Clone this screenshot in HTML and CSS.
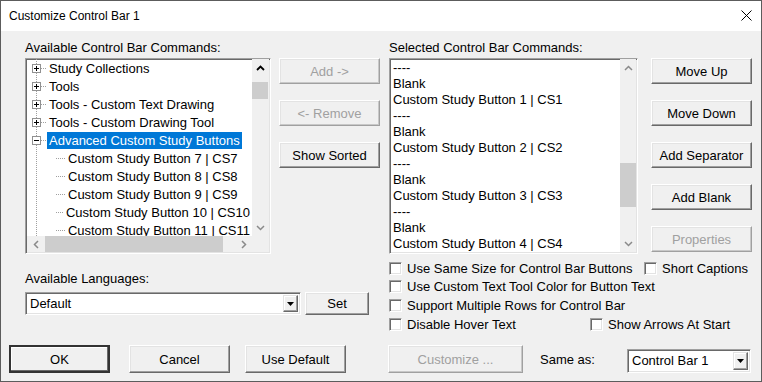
FILE: index.html
```html
<!DOCTYPE html>
<html lang="en">
<head>
    <meta charset="UTF-8">
    <title>Customize Control Bar 1</title>
    <link rel="stylesheet" href="styles.css">
</head>
<body>

    <div class="window">
        <!-- Title bar -->
        <div class="titlebar">
            <span class="title">Customize Control Bar 1</span>
            <svg class="close" width="11" height="11" viewBox="0 0 11 11">
                <path d="M0.5 0.5 L10.5 10.5 M10.5 0.5 L0.5 10.5" stroke="#000" stroke-width="1" fill="none"/>
            </svg>
        </div>

        <div class="client">
            <!-- Command lists -->
            <div class="top-row">
                <div class="tree-group">
                    <div class="label">Available Control Bar Commands:</div>
                    <div class="sunken tree">
                        <div class="tree-rows">
                            <div class="node"><i class="exp plus"></i><i class="twig"></i><span>Study Collections</span></div>
                            <div class="node"><i class="exp plus"></i><i class="twig"></i><span>Tools</span></div>
                            <div class="node"><i class="exp plus"></i><i class="twig"></i><span>Tools - Custom Text Drawing</span></div>
                            <div class="node"><i class="exp plus"></i><i class="twig"></i><span>Tools - Custom Drawing Tool</span></div>
                            <div class="node"><i class="exp minus"></i><i class="twig"></i><span class="sel">Advanced Custom Study Buttons</span></div>
                            <div class="node child"><i class="twig long"></i><span>Custom Study Button 7 | CS7</span></div>
                            <div class="node child"><i class="twig long"></i><span>Custom Study Button 8 | CS8</span></div>
                            <div class="node child"><i class="twig long"></i><span>Custom Study Button 9 | CS9</span></div>
                            <div class="node child"><i class="twig long"></i><span>Custom Study Button 10 | CS10</span></div>
                            <div class="node child"><i class="twig long"></i><span>Custom Study Button 11 | CS11</span></div>
                        </div>
                        <div class="vscroll">
                            <div class="arrow">
                                <svg width="9" height="6" viewBox="0 0 9 6"><path d="M1 5 L4.5 1.5 L8 5" stroke="#000" stroke-width="1.8" fill="none"/></svg>
                            </div>
                            <div class="track"><div class="thumb tree-thumb"></div></div>
                            <div class="arrow">
                                <svg width="9" height="6" viewBox="0 0 9 6"><path d="M1 1 L4.5 4.5 L8 1" stroke="#8a8a8a" stroke-width="1.5" fill="none"/></svg>
                            </div>
                        </div>
                        <div class="hscroll">
                            <div class="arrow">
                                <svg width="6" height="9" viewBox="0 0 6 9"><path d="M5 1 L1.5 4.5 L5 8" stroke="#8a8a8a" stroke-width="1.5" fill="none"/></svg>
                            </div>
                            <div class="track"><div class="thumb h-thumb"></div></div>
                            <div class="arrow">
                                <svg width="6" height="9" viewBox="0 0 6 9"><path d="M1 1 L4.5 4.5 L1 8" stroke="#8a8a8a" stroke-width="1.5" fill="none"/></svg>
                            </div>
                        </div>
                        <div class="corner"></div>
                    </div>
                </div>

                <div class="btn-col mid-col">
                    <div class="btn disabled">Add -&gt;</div>
                    <div class="btn disabled">&lt;- Remove</div>
                    <div class="btn">Show Sorted</div>
                </div>

                <div class="list-group">
                    <div class="label">Selected Control Bar Commands:</div>
                    <div class="sunken list">
                        <div class="list-rows">
                            <div class="item">----</div>
                            <div class="item">Blank</div>
                            <div class="item">Custom Study Button 1 | CS1</div>
                            <div class="item">----</div>
                            <div class="item">Blank</div>
                            <div class="item">Custom Study Button 2 | CS2</div>
                            <div class="item">----</div>
                            <div class="item">Blank</div>
                            <div class="item">Custom Study Button 3 | CS3</div>
                            <div class="item">----</div>
                            <div class="item">Blank</div>
                            <div class="item">Custom Study Button 4 | CS4</div>
                        </div>
                        <div class="vscroll">
                            <div class="arrow">
                                <svg width="9" height="6" viewBox="0 0 9 6"><path d="M1 5 L4.5 1.5 L8 5" stroke="#8a8a8a" stroke-width="1.5" fill="none"/></svg>
                            </div>
                            <div class="track"><div class="thumb list-thumb"></div></div>
                            <div class="arrow">
                                <svg width="9" height="6" viewBox="0 0 9 6"><path d="M1 1 L4.5 4.5 L8 1" stroke="#8a8a8a" stroke-width="1.5" fill="none"/></svg>
                            </div>
                        </div>
                    </div>
                </div>

                <div class="btn-col right-col">
                    <div class="btn">Move Up</div>
                    <div class="btn">Move Down</div>
                    <div class="btn">Add Separator</div>
                    <div class="btn">Add Blank</div>
                    <div class="btn disabled">Properties</div>
                </div>
            </div>

            <!-- Languages and options -->
            <div class="mid-row">
                <div class="lang">
                    <div class="label">Available Languages:</div>
                    <div class="lang-line">
                        <div class="sunken combo lang-combo">
                            <span class="combo-text">Default</span>
                            <div class="drop"><svg width="7" height="4" viewBox="0 0 7 4"><path d="M0 0 H7 L3.5 4 Z" fill="#000"/></svg></div>
                        </div>
                        <div class="btn set-btn">Set</div>
                    </div>
                </div>

                <div class="checks">
                    <div class="check-row first">
                        <label class="check same-size"><i class="box"></i>Use Same Size for Control Bar Buttons</label>
                        <label class="check"><i class="box"></i>Short Captions</label>
                    </div>
                    <div class="check-row">
                        <label class="check"><i class="box"></i>Use Custom Text Tool Color for Button Text</label>
                    </div>
                    <div class="check-row">
                        <label class="check"><i class="box"></i>Support Multiple Rows for Control Bar</label>
                    </div>
                    <div class="check-row">
                        <label class="check hover-text"><i class="box"></i>Disable Hover Text</label>
                        <label class="check"><i class="box"></i>Show Arrows At Start</label>
                    </div>
                </div>
            </div>

            <!-- Dialog buttons -->
            <div class="bottom-row">
                <div class="btn big default">OK</div>
                <div class="btn big cancel">Cancel</div>
                <div class="btn big use-default">Use Default</div>
                <div class="btn big disabled customize">Customize ...</div>
                <div class="same-label">Same as:</div>
                <div class="sunken combo bar-combo">
                    <span class="combo-text">Control Bar 1</span>
                    <div class="drop"><svg width="7" height="4" viewBox="0 0 7 4"><path d="M0 0 H7 L3.5 4 Z" fill="#000"/></svg></div>
                </div>
            </div>
        </div>
    </div>

</body>
</html>
```

FILE: styles.css
```css
* {
    margin: 0;
    padding: 0;
    box-sizing: border-box;
}

body {
    width: 762px;
    height: 382px;
    overflow: hidden;
    font-family: "Liberation Sans", Arial, sans-serif;
    font-size: 13px;
    color: #000;
    background: #f0f0f0;
}

i {
    display: block;
    font-style: normal;
}

.window {
    width: 762px;
    height: 382px;
    border: 1px solid #5c5c5c;
    display: flex;
    flex-direction: column;
    background: #f0f0f0;
}

/* Title bar */
.titlebar {
    height: 30px;
    background: #fff;
    display: flex;
    align-items: center;
    padding-left: 8px;
}

.title {
    font-size: 12px;
    flex: 1;
}

.close {
    margin-right: 9px;
    margin-top: -1px;
}

.client {
    flex: 1;
}

.label {
    height: 16px;
    line-height: 16px;
    white-space: nowrap;
}

/* 3D borders */
.sunken {
    border: 1px solid;
    border-color: #a0a0a0 #fff #fff #a0a0a0;
    box-shadow: inset 1px 1px #696969, inset -1px -1px #e3e3e3;
    background: #fff;
}

.btn {
    display: flex;
    align-items: center;
    justify-content: center;
    height: 26px;
    background: #f0f0f0;
    border: 1px solid;
    border-color: #fff #696969 #696969 #fff;
    box-shadow: inset -1px -1px #a0a0a0, inset 1px 1px #e3e3e3;
    white-space: nowrap;
}

.btn.disabled {
    color: #a0a0a0;
    border-color: #fff #a0a0a0 #a0a0a0 #fff;
    box-shadow: inset -1px -1px #c8c8c8, inset 1px 1px #e3e3e3;
}

.btn.default {
    border: 2px solid;
    border-color: #333 #333 #333 #333;
    box-shadow: inset -1px -1px #696969, inset 1px 1px #fff;
}

/* Top row */
.top-row {
    display: flex;
    padding: 9px 0 0 24px;
}

.tree-group {
    width: 246px;
}

.label + .sunken {
    margin-top: 2px;
}

.tree {
    height: 196px;
    display: grid;
    grid-template-columns: 1fr 17px;
    grid-template-rows: 1fr 16px;
    overflow: hidden;
    padding: 0 1px 1px 1px;
}

.tree-rows {
    overflow: hidden;
    background: linear-gradient(to bottom, #a0a0a0 50%, transparent 50%) 9px 0 / 1px 2px repeat-y;
}

.node {
    height: 18px;
    display: flex;
    align-items: center;
    white-space: nowrap;
}

.exp {
    width: 9px;
    height: 9px;
    margin-left: 5px;
    border: 1px solid #919191;
    background-color: #fff;
}

.exp.plus {
    background: linear-gradient(#000, #000) center / 5px 1px no-repeat,
                linear-gradient(#000, #000) center / 1px 5px no-repeat,
                #fff;
}

.exp.minus {
    background: linear-gradient(#000, #000) center / 5px 1px no-repeat, #fff;
}

.twig {
    width: 6px;
    height: 1px;
    background: linear-gradient(to right, #a0a0a0 50%, transparent 50%) 0 0 / 2px 1px repeat-x;
}

.twig.long {
    width: 10px;
    margin-left: 29px;
}

.node span {
    padding: 0 2px;
    height: 17px;
    line-height: 17px;
}

.node .sel {
    background: #0078d7;
    color: #fff;
}

/* Scrollbars */
.vscroll {
    display: flex;
    flex-direction: column;
    background: #f0f0f0;
}

.hscroll {
    display: flex;
    background: #f0f0f0;
}

.arrow {
    display: flex;
    align-items: center;
    justify-content: center;
    flex: 0 0 17px;
}

.vscroll .track {
    flex: 1;
}

.hscroll .track {
    flex: 1;
}

.thumb {
    background: #cdcdcd;
}

.tree-thumb {
    margin-top: 6px;
    height: 17px;
    width: 16px;
}

.h-thumb {
    margin-left: 1px;
    width: 178px;
    height: 16px;
}

.list-thumb {
    margin-top: 87px;
    height: 44px;
    width: 16px;
}

.corner {
    background: #f0f0f0;
}

.btn-col {
    display: flex;
    flex-direction: column;
    gap: 16px;
    padding-top: 18px;
    width: 101px;
}

.mid-col {
    margin-left: 8px;
}

.right-col {
    margin-left: 13px;
}

.list-group {
    width: 249px;
    margin-left: 9px;
}

.list {
    height: 196px;
    display: flex;
    padding: 0 1px 1px 1px;
    overflow: hidden;
}

.list-rows {
    flex: 1;
    padding: 1px 0 0 2px;
    overflow: hidden;
}

.item {
    height: 16px;
    line-height: 16px;
    white-space: nowrap;
}

/* Middle row */
.mid-row {
    display: flex;
    height: 82px;
}

.lang {
    margin-left: 24px;
    padding-top: 17px;
    width: 344px;
}

.lang .label {
    margin-bottom: 5px;
}

.lang-line {
    display: flex;
    gap: 4px;
}

.combo {
    display: flex;
    align-items: center;
    height: 23px;
    padding: 2px;
}

.combo-text {
    flex: 1;
    padding-left: 2px;
    white-space: nowrap;
}

.drop {
    width: 15px;
    height: 100%;
    display: flex;
    align-items: center;
    justify-content: center;
    background: #f0f0f0;
    border: 1px solid;
    border-color: #e3e3e3 #696969 #696969 #e3e3e3;
    box-shadow: inset -1px -1px #a0a0a0, inset 1px 1px #fff;
}

.lang-combo {
    width: 276px;
}

.set-btn {
    width: 64px;
    height: 23px;
}

.checks {
    margin-left: 20px;
    padding-top: 5px;
}

.check-row {
    display: flex;
    align-items: center;
    height: 19px;
}

.check-row.first {
    height: 18px;
}

.check {
    display: flex;
    align-items: center;
    white-space: nowrap;
}

.box {
    width: 13px;
    height: 13px;
    margin-right: 5px;
    background: #fff;
    border: 1px solid;
    border-color: #a0a0a0 #fff #fff #a0a0a0;
    box-shadow: inset 1px 1px #696969, inset -1px -1px #e3e3e3;
}

.same-size {
    width: 255px;
}

.hover-text {
    width: 201px;
}

/* Bottom row */
.bottom-row {
    display: flex;
    align-items: center;
    margin-top: 9px;
    padding-left: 8px;
}

.btn.big {
    height: 28px;
    width: 101px;
}

.cancel {
    margin-left: 19px;
}

.use-default {
    margin-left: 15px;
}

.btn.customize {
    margin-left: 42px;
    width: 135px;
}

.same-label {
    margin-left: 17px;
    width: 87px;
}

.bar-combo {
    width: 124px;
    height: 24px;
    margin-top: 3px;
}
```
